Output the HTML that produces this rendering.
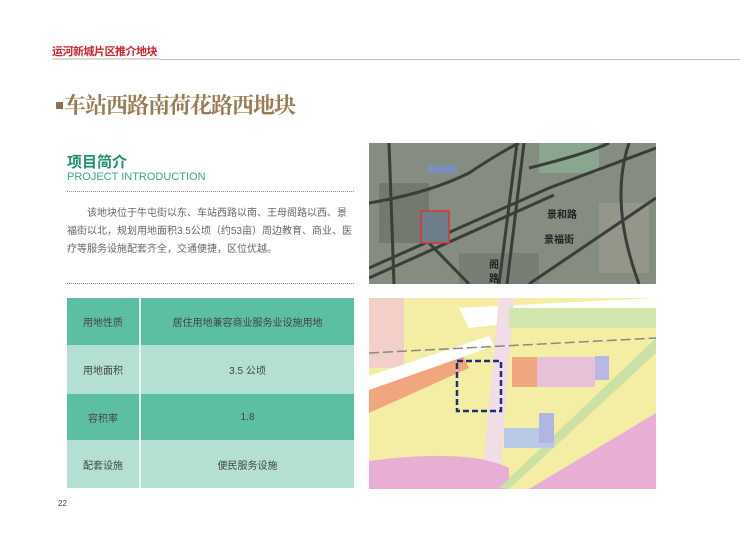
<!DOCTYPE html>
<html><head><meta charset="utf-8"><style>
*{margin:0;padding:0;box-sizing:border-box}
body{width:740px;height:545px;background:#fff;position:relative;overflow:hidden;font-family:"Liberation Sans","Noto Sans CJK SC",sans-serif}
.a{position:absolute}
</style></head><body>
<div class="a" style="left:52px;top:43px;font-size:11px;font-weight:bold;color:#c8262a;letter-spacing:-0.5px">运河新城片区推介地块</div>
<div class="a" style="left:52px;top:58px;width:108px;height:2px;background:#e0d8d8"></div>
<div class="a" style="left:160px;top:59px;width:580px;height:1px;background:#bbb"></div>
<div class="a" style="left:56px;top:102px;width:7px;height:7px;background:#8d7355"></div>
<div class="a" style="left:64px;top:89px;font-family:'Noto Serif CJK SC',serif;font-size:22px;font-weight:bold;color:#9a7b55;letter-spacing:-1px">车站西路南荷花路西地块</div>
<div class="a" style="left:67px;top:151px;font-size:15px;font-weight:bold;color:#1f8f73">项目简介</div>
<div class="a" style="left:67px;top:171px;font-size:11px;color:#3aa88a">PROJECT INTRODUCTION</div>
<div class="a" style="left:67px;top:191px;width:287px;border-top:1px dotted #888"></div>
<div class="a" style="left:67px;top:205px;width:286px;font-size:10px;line-height:18px;color:#666;text-indent:20px">该地块位于牛屯街以东、车站西路以南、王母阁路以西、景福街以北，规划用地面积3.5公顷（约53亩）周边教育、商业、医疗等服务设施配套齐全，交通便捷，区位优越。</div>
<div class="a" style="left:67px;top:283px;width:287px;border-top:1px dotted #888"></div>
<div class="a" style="left:67px;top:298px;width:287px;font-size:10px;color:#444">
<div style="display:flex;height:47px;background:#5cbfa3"><div style="width:74px;border-right:2px solid #e8f5f0;display:flex;align-items:center;justify-content:center">用地性质</div><div style="flex:1;display:flex;align-items:center;justify-content:center">居住用地兼容商业服务业设施用地</div></div>
<div style="display:flex;height:49px;background:#b4e0d4"><div style="width:74px;border-right:2px solid #e8f5f0;display:flex;align-items:center;justify-content:center">用地面积</div><div style="flex:1;display:flex;align-items:center;justify-content:center">3.5 公顷</div></div>
<div style="display:flex;height:46px;background:#5cbfa3"><div style="width:74px;border-right:2px solid #e8f5f0;display:flex;align-items:center;justify-content:center">容积率</div><div style="flex:1;display:flex;align-items:center;justify-content:center">1.8</div></div>
<div style="display:flex;height:48px;background:#b4e0d4"><div style="width:74px;border-right:2px solid #e8f5f0;display:flex;align-items:center;justify-content:center">配套设施</div><div style="flex:1;display:flex;align-items:center;justify-content:center">便民服务设施</div></div>
</div>
<div class="a" style="left:58px;top:499px;font-size:8px;color:#444">22</div>
<svg class="a" style="left:369px;top:143px" width="287" height="141" viewBox="0 0 287 141">
<rect width="287" height="141" fill="#858c80"/>
<rect x="170" y="0" width="60" height="30" fill="#8aa68e"/>
<rect x="10" y="40" width="50" height="60" fill="#727a70"/>
<rect x="230" y="60" width="50" height="70" fill="#939689"/>
<rect x="90" y="110" width="80" height="31" fill="#777e74"/>
<g stroke="#3a3d38" stroke-width="3" fill="none">
<path d="M0 125 L180 45 L287 5"/><path d="M0 135 L185 52"/>
<path d="M148 0 L130 141"/><path d="M155 0 L138 141"/>
<path d="M160 141 L287 55"/><path d="M20 0 L25 141"/>
<path d="M0 60 Q60 50 100 30 Q130 10 150 0"/><path d="M160 25 Q220 10 240 0"/>
<path d="M260 0 Q240 60 270 141"/><path d="M60 100 L100 141"/>
</g>
<rect x="58" y="22" width="30" height="8" fill="#7a90b8"/>
<rect x="52" y="68" width="28" height="32" fill="#6d7e8a" stroke="#d33" stroke-width="1.5"/>
<g font-size="10" fill="#222" font-weight="bold"><text x="178" y="75">景和路</text><text x="175" y="100">景福街</text><text x="120" y="125">阁</text><text x="120" y="139">路</text></g>
</svg>
<svg class="a" style="left:369px;top:298px" width="287" height="191" viewBox="0 0 287 191">
<rect width="287" height="191" fill="#f3eea3"/>
<rect x="0" y="0" width="35" height="70" fill="#f2cfc7"/>
<path d="M0 90 L90 50 L100 70 L0 115Z" fill="#f0a67e"/>
<path d="M0 78 L120 38 L125 48 L0 92Z" fill="#fff"/>
<path d="M90 10 L287 0 L287 10 L100 30Z" fill="#fff"/>
<path d="M130 0 L145 0 L130 191 L112 191Z" fill="#f1dde6"/>
<path d="M0 163 Q100 150 140 170 L140 191 L0 191Z" fill="#e8aed4"/>
<path d="M160 191 L287 115 L287 191Z" fill="#e8aed4"/>
<path d="M130 190 L287 40 L287 55 L140 191Z" fill="#cde0a6"/>
<rect x="140" y="10" width="147" height="20" fill="#d2e5ac"/>
<rect x="143" y="59" width="25" height="30" fill="#f0a67e"/>
<rect x="168" y="59" width="58" height="30" fill="#e8c0d8"/>
<rect x="226" y="58" width="14" height="24" fill="#b9b7e4"/>
<rect x="135" y="130" width="50" height="20" fill="#b9c9e6"/>
<rect x="170" y="115" width="15" height="30" fill="#b0b6e4"/>
<rect x="88" y="63" width="44" height="50" fill="none" stroke="#1e2f78" stroke-width="2.5" stroke-dasharray="6,3"/>
<path d="M0 55 L287 40" stroke="#888" stroke-width="1.5" stroke-dasharray="10,4"/>
</svg>
</body></html>
